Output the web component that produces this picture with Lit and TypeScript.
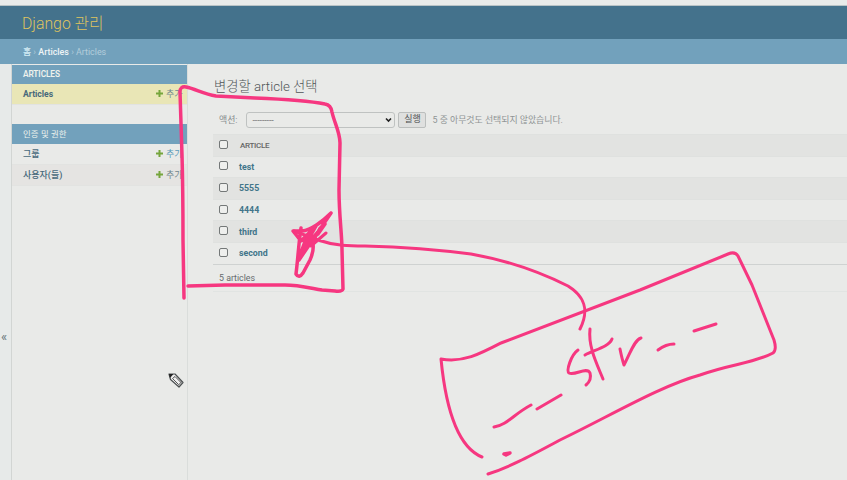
import { LitElement, html, css, svg } from "lit";
import { customElement } from "lit/decorators.js";

const ROWS = ["test", "5555", "4444", "third", "second"];

const STROKES = [
  "M184 298 L183 240 Q183 190 182 155 L180 92 Q180 86 186 87 C196 89 203 94 216 96 L255 98 C280 99 310 101 325 104 Q331 105 332 112 C334 122 340 132 340 143 L339 190 C339 215 342 235 342 250 L343 289 Q342 292 335 291 L322 290 C310 288 298 285 285 285 L225 285 L188 286",
  "M331 213 L299 260 M331 213 C323 221 311 230 302 231 L293 231 L301 241 L316 226 L303 249 L325 224 L318 234 M301 228 C299 240 298 258 296 274 Q299 279 303 273 L310 260 Q314 251 313 244 L307 236 L299 258",
  "M326 233 L311 246 L320 228 M294 231 L318 240 C335 246 350 246 365 246 C400 247 440 250 471 254 C505 260 540 272 568 286 C584 296 590 309 580 329",
  "M482 457 C455 446 445 400 441 359 M441 359 C463 363 480 354 501 343 L640 290 L728 254 Q735 251 738 256 L752 285 L774 340 Q777 350 773 353 C755 363 730 364 700 375 C660 386 610 416 560 440 C530 456 510 467 488 474",
  "M494 427 C507 425 514 414 531 405 M537 409 L561 395",
  "M578 350 C571 355 566 371 569 373 C575 376 587 366 590 373 Q592 380 586 385",
  "M590 329 C588 347 597 364 603 379 M585 355 C594 350 609 347 612 339",
  "M620 349 Q622 359 624 365 C630 354 634 340 641 338",
  "M658 350 Q666 344 674 344 M694 331 L716 324",
  "M504 454 L510 453 L506 455 Z",
];

@customElement("app-root")
export class AppRoot extends LitElement {
  static styles = css`
    :host { display: block; width: 847px; height: 480px; overflow: hidden; position: relative;
      background: #e9eae8; color: #666b6d; font: 9px Roboto, "Noto Sans CJK KR", sans-serif; }
    * { box-sizing: border-box; }
    .page { display: flex; flex-direction: column; height: 480px; }
    .top { height: 6px; flex: none; background: #e9ebea; border-bottom: 1px solid #b9c3c6; }
    .brand { height: 33px; flex: none; background: #44728c; color: #dfc35f; padding-left: 22px;
      font-size: 15.8px; font-weight: 300; line-height: 35px; white-space: nowrap; }
    .crumbs { height: 25px; flex: none; background: #72a1bc; color: #b3cddb; padding-left: 23px;
      line-height: 26px; font-size: 8.9px; white-space: pre; }
    .crumbs b { font-weight: 500; color: #eef4f6; }
    .crumbs .home { color: #d5edf5; }
    .body { flex: 1; display: flex; min-height: 0; }
    .toggle { width: 12px; flex: none; border-right: 1px solid #d2d5d3; background: #e7eae9;
      display: flex; align-items: center; padding: 0 0 0 1px; font-size: 13px; color: #69777c; }
    .toggle span { margin-top: 128px; }
    .side { width: 176px; flex: none; border-right: 1px solid #dadddb; padding-top: 1px; }
    .cap { height: 19px; background: #72a1bc; color: #eef2ec; font-size: 8.3px; font-weight: 600;
      line-height: 19px; padding-left: 11px; letter-spacing: -.1px; }
    .cap.auth { height: 20px; line-height: 20px; margin-top: 19px; font-size: 8.4px; font-weight: 400; letter-spacing: .15px; }
    .item { height: 21px; display: flex; align-items: center; padding: 0 5px 1px 11px;
      color: #47697b; font-weight: 500; border-bottom: 1px solid #e2e3e1; }
    .item.current { background: #e9e6b6; font-weight: 700; font-size: 8.6px; }
    .item.last { background: #e5e4e2; }
    .item .name { flex: 1; }
    .add { display: flex; align-items: center; gap: 3px; font-size: 9px; font-weight: 400; width: 26px; white-space: nowrap; color: #71868d; }
    .add.link { color: #5b9ab8; }
    .add svg { width: 7px; height: 7px; flex: none; }
    .main { flex: 1; min-width: 0; padding-left: 25px; display: flex; flex-direction: column; }
    h1 { margin: 12px 0 0 1px; height: 20px; line-height: 21px; font-size: 13.3px; font-weight: 300; color: #505557; white-space: nowrap; }
    .actions { height: 23px; flex: none; margin-top: 12px; padding-left: 6px; display: flex; align-items: center; color: #888d8e; font-size: 8.9px; }
    .select { width: 149px; height: 16px; margin-left: 9px; border: 1px solid #bfc2c1; border-radius: 3px;
      display: flex; align-items: center; justify-content: space-between; padding: 0 2px 0 5px; color: #777; }
    .select .dash { letter-spacing: -.1px; width: 23px; overflow: hidden; }
    .select svg { width: 7px; height: 6px; }
    .run { width: 28px; height: 16px; margin-left: 3px; border: 1px solid #bbbebd; border-radius: 2px;
      background: #dfe0df; color: #4d5152; padding: 0; font: inherit; font-size: 9px; line-height: 13px; }
    .count { margin-left: 6px; color: #8f9495; white-space: nowrap; }
    .list { border-bottom: 1px solid #cfd2d1; height: 131px; flex: none; margin-top: 3px; display: flex; flex-direction: column; }
    .row { height: 21.6px; flex: none; display: flex; align-items: center; padding-left: 6px; border-top: 1px solid #dfe1df; color: #41758a; font-weight: 700; font-size: 8.8px; }
    .row:nth-child(odd) { background: #e2e3e1; }
    .row.head { color: #666; font-size: 8px; font-weight: 500; letter-spacing: -.3px; }
    .box { width: 9px; height: 9px; border: 1px solid #747878; border-radius: 2px; background: #eeefed; margin-top: -2px; }
    .label { margin-left: 11px; }
    .head .label { margin-left: 12px; }
    .pager { height: 27px; flex: none; border-bottom: 1px solid #e1e4e2; padding-left: 6px; line-height: 27px; font-size: 8.8px; }
    .ink { position: absolute; left: 0; top: 0; width: 847px; height: 480px; pointer-events: none; }
    .stroke { fill: none; stroke: #f63780; stroke-width: 3; stroke-linecap: round; stroke-linejoin: round; }
    .thick { stroke-width: 3.5; }
  `;

  private add(link = false) {
    return html`<span class="add ${link ? "link" : ""}"><svg viewBox="0 0 7 7"><path d="M3.5 0v7M0 3.5h7" stroke="#76a53c" stroke-width="2"/></svg>추가</span>`;
  }

  render() {
    return html`
      <div class="page">
        <div class="top"></div>
        <header class="brand">Django 관리</header>
        <nav class="crumbs"><b class="home">홈</b> › <b>Articles</b> › Articles</nav>
        <div class="body">
          <div class="toggle"><span>«</span></div>
          <aside class="side">
            <div class="cap">ARTICLES</div>
            <div class="item current"><span class="name">Articles</span>${this.add()}</div>
            <div class="cap auth">인증 및 권한</div>
            <div class="item"><span class="name">그룹</span>${this.add(true)}</div>
            <div class="item last"><span class="name">사용자(들)</span>${this.add()}</div>
          </aside>
          <main class="main">
            <h1>변경할 article 선택</h1>
            <div class="actions">
              <span>액션:</span>
              <span class="select"><span class="dash">---------</span>
                <svg viewBox="0 0 7 6"><path d="M1 1.5 3.5 4 6 1.5" fill="none" stroke="#222" stroke-width="1.6"/></svg></span>
              <button class="run">실행</button>
              <span class="count">5 중 아무것도 선택되지 않았습니다.</span>
            </div>
            <div class="list">
              <div class="row head"><span class="box"></span><span class="label">ARTICLE</span></div>
              ${ROWS.map((r) => html`<div class="row"><span class="box"></span><span class="label">${r}</span></div>`)}
            </div>
            <div class="pager">5 articles</div>
          </main>
        </div>
      </div>
      <svg class="ink" viewBox="0 0 847 480">
        ${STROKES.map((d, i) => svg`<path class="stroke ${i === 0 || i === 1 || i === 9 ? "thick" : ""}" d=${d}/>`)}
        <g transform="translate(168 373)" stroke-linejoin="round">
          <path d="M1 1 7 1 15 9.500 11 14 2.500 6.500Z" fill="#eee" stroke="#4b4f50" stroke-width="1.2"/>
          <path d="M1 1 5.500 1 2 5Z" fill="#222"/>
          <path d="M4.500 5.500 10.500 11.500M7 3.500 13 9.500M4.500 5.500 7 3.500M10 12.500 13.800 8.500" fill="none" stroke="#555" stroke-width="1"/>
        </g>
      </svg>`;
  }
}
